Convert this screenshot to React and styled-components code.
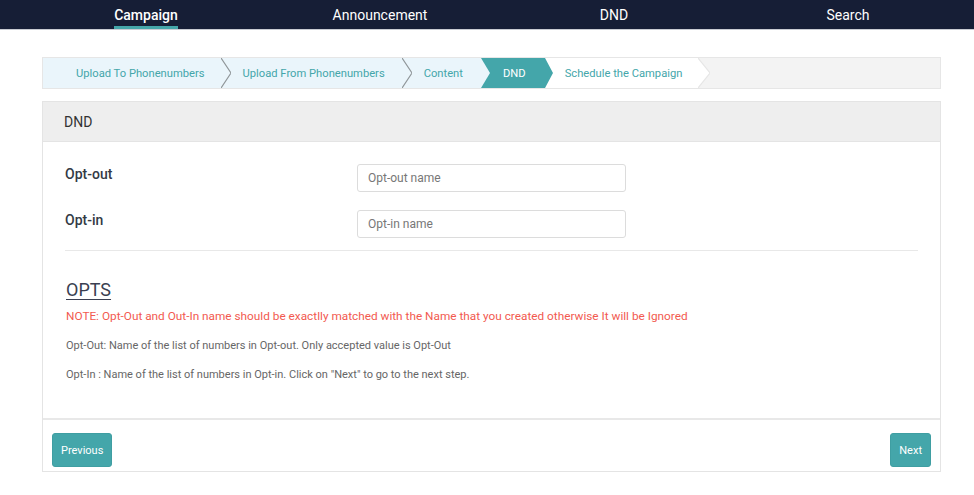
import React from "react";
import styled, { createGlobalStyle } from "styled-components";

const Global = createGlobalStyle`
  html, body { margin: 0; padding: 0; background: #fff; }
  body { font-family: Roboto, "Liberation Sans", Arial, sans-serif; }
  * { box-sizing: border-box; }
`;

const Nav = styled.nav`
  height: 30px;
  background: #161e36;
  border-bottom: 1px solid #c9cbd2;
  display: grid;
  grid-template-columns: repeat(4, 234px);
  padding-left: 29px;
`;

const NavItem = styled.a`
  display: flex;
  justify-content: center;
  align-items: flex-start;
  color: #fff;
  font-size: 14px;
  font-weight: ${(p) => (p.$active ? 500 : 400)};
  text-decoration: none;
  padding-top: 7px;
`;

const NavLabel = styled.span`
  display: inline-block;
  height: 22px;
  border-bottom: 3px solid ${(p) => (p.$active ? "#44a6aa" : "transparent")};
`;

const Main = styled.main`
  padding: 27px 33px 0 42px;
`;

const Crumbs = styled.div`
  display: flex;
  height: 32px;
  background: #f3f3f3;
  border: 1px solid #e6e6e6;
  font-size: 11.2px;
`;

const Step = styled.div`
  display: flex;
  align-items: center;
  background: ${(p) => p.$bg};
  color: ${(p) => p.$color};
  padding: 0 ${(p) => p.$pr}px 0 ${(p) => p.$pl}px;
  white-space: nowrap;
`;

const SepSvg = styled.svg`
  display: block;
  flex: none;
`;

function Sep({ w, left, right, stroke }) {
  return (
    <SepSvg width={w} height={30} viewBox={`0 0 ${w} 30`}>
      <rect x="0" y="0" width={w} height="30" fill={right} />
      <polygon points={`0,0 ${w},15 0,30`} fill={left} />
      {stroke && (
        <polyline
          points={`0,0 ${w},15 0,30`}
          fill="none"
          stroke={stroke}
          strokeWidth="1.2"
        />
      )}
    </SepSvg>
  );
}

const Panel = styled.section`
  margin-top: 12px;
  border: 1px solid #e4e4e4;
  width: 899px;
`;

const PanelHead = styled.div`
  height: 40px;
  background: #eeeeee;
  border-bottom: 1px solid #e4e4e4;
  display: flex;
  align-items: center;
  padding-left: 21px;
  font-size: 14px;
  color: #333;
`;

const Body = styled.div`
  padding: 22px 22px 36px 22px;
`;

const FieldRow = styled.div`
  display: grid;
  grid-template-columns: 292px 269px;
  align-items: center;
  margin-bottom: ${(p) => p.$mb}px;
`;

const Label = styled.label`
  font-size: 14px;
  font-weight: 500;
  color: #333a45;
  align-self: start;
  padding-top: 2px;
`;

const Input = styled.input`
  height: 28px;
  width: 269px;
  border: 1px solid #dcdcdc;
  border-radius: 3px;
  padding: 0 10px;
  font-family: Roboto, "Liberation Sans", sans-serif;
  font-size: 12px;
  color: #333;
  &::placeholder { color: #777; }
`;

const Divider = styled.hr`
  border: 0;
  border-top: 1px solid #e8e8e8;
  margin: 12px 0 0 0;
`;

const Heading = styled.h3`
  margin: 28px 0 0 1px;
  font-size: 18px;
  font-weight: 400;
  color: #3a3f51;
  text-decoration: underline;
  text-underline-offset: 3px;
  line-height: 22px;
`;

const Note = styled.p`
  margin: 7px 0 0 1px;
  font-size: 11.8px;
  color: #f25a50;
  line-height: 16px;
`;

const Info = styled.p`
  margin: ${(p) => p.$mt}px 0 0 1px;
  font-size: 11px;
  color: #666;
  line-height: 15px;
`;

const Footer = styled.div`
  border-top: 2px solid #e8e8e8;
  display: flex;
  justify-content: space-between;
  padding: 13px 9px 4px 9px;
`;

const Button = styled.button`
  height: 34px;
  padding: 0 ${(p) => p.$px}px;
  background: #44a6aa;
  border: 1px solid #3f9ea2;
  border-radius: 3px;
  color: #fff;
  font-family: Roboto, "Liberation Sans", sans-serif;
  font-size: 11px;
`;

export default function App() {
  const blue = "#eaf5fb";
  const teal = "#44a6aa";
  return (
    <>
      <Global />
      <Nav>
        <NavItem $active><NavLabel $active>Campaign</NavLabel></NavItem>
        <NavItem><NavLabel>Announcement</NavLabel></NavItem>
        <NavItem><NavLabel>DND</NavLabel></NavItem>
        <NavItem><NavLabel>Search</NavLabel></NavItem>
      </Nav>
      <Main>
        <Crumbs>
          <Step $bg={blue} $color={teal} $pl={33} $pr={16}>Upload To Phonenumbers</Step>
          <Sep w={10} left={blue} right={blue} stroke="#8f9598" />
          <Step $bg={blue} $color={teal} $pl={12} $pr={17}>Upload From Phonenumbers</Step>
          <Sep w={10} left={blue} right={blue} stroke="#8f9598" />
          <Step $bg={blue} $color={teal} $pl={12} $pr={18}>Content</Step>
          <Sep w={9} left={blue} right={teal} />
          <Step $bg={teal} $color="#fff" $pl={13} $pr={19}>DND</Step>
          <Sep w={8} left={teal} right="#fff" />
          <Step $bg="#fff" $color={teal} $pl={12} $pr={16}>Schedule the Campaign</Step>
          <Sep w={12} left="#fff" right="#f3f3f3" stroke="#e6e6e6" />
        </Crumbs>
        <Panel>
          <PanelHead>DND</PanelHead>
          <Body>
            <FieldRow $mb={18}>
              <Label>Opt-out</Label>
              <Input placeholder="Opt-out name" />
            </FieldRow>
            <FieldRow $mb={0}>
              <Label>Opt-in</Label>
              <Input placeholder="Opt-in name" />
            </FieldRow>
            <Divider />
            <Heading>OPTS</Heading>
            <Note>
              NOTE: Opt-Out and Out-In name should be exactlly matched with the Name that you created otherwise It will be Ignored
            </Note>
            <Info $mt={14}>Opt-Out: Name of the list of numbers in Opt-out. Only accepted value is Opt-Out</Info>
            <Info $mt={14}>Opt-In : Name of the list of numbers in Opt-in. Click on "Next" to go to the next step.</Info>
          </Body>
          <Footer>
            <Button $px={8}>Previous</Button>
            <Button $px={8}>Next</Button>
          </Footer>
        </Panel>
      </Main>
    </>
  );
}
